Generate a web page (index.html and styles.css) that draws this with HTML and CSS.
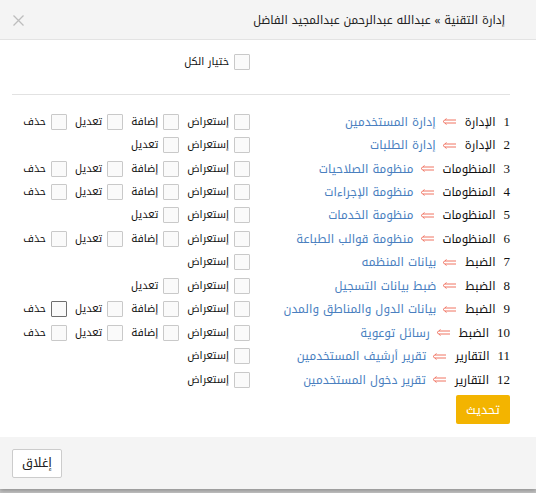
FILE: index.html
```html
<!DOCTYPE html>
<html lang="ar" dir="rtl">
<head>
<meta charset="utf-8">
<title>الصلاحيات</title>
<link rel="stylesheet" href="styles.css">
</head>
<body>
<div class="modal">
  <div class="modal-header">
    <h4 class="title">إدارة التقنية » عبدالله عبدالرحمن عبدالمجيد الفاضل</h4>
    <span class="close"><svg width="11" height="11" viewBox="0 0 11 11"><path d="M0.5 0.5 L10.5 10.5 M10.5 0.5 L0.5 10.5" stroke="#bdbdbd" stroke-width="1.3" fill="none"/></svg></span>
  </div>
  <div class="modal-body">
    <div class="grid select-all">
      <div></div>
      <div class="perms"><label class="chk"><span class="box"></span><span class="lbl">ختيار الكل</span></label></div>
    </div>
    <hr class="sep">
    <div class="rows">
      <div class="grid row">
        <div class="name"><span class="num">1</span><span class="cat">الإدارة</span><svg class="arr" width="14" height="7" viewBox="0 0 14 7"><path d="M4.5 0.5 L1 3.5 L4.5 6.5 M3 2 H14 M3 5 H14" stroke="#f07463" stroke-width="1" fill="none"/></svg><a class="link">إدارة المستخدمين</a></div>
        <div class="perms"><label class="chk"><span class="box"></span><span class="lbl">إستعراض</span></label><label class="chk"><span class="box"></span><span class="lbl">إضافة</span></label><label class="chk"><span class="box"></span><span class="lbl">تعديل</span></label><label class="chk"><span class="box"></span><span class="lbl">حذف</span></label></div>
      </div>
      <div class="grid row">
        <div class="name"><span class="num">2</span><span class="cat">الإدارة</span><svg class="arr" width="14" height="7" viewBox="0 0 14 7"><path d="M4.5 0.5 L1 3.5 L4.5 6.5 M3 2 H14 M3 5 H14" stroke="#f07463" stroke-width="1" fill="none"/></svg><a class="link">إدارة الطلبات</a></div>
        <div class="perms"><label class="chk"><span class="box"></span><span class="lbl">إستعراض</span></label><label class="chk"><span class="box"></span><span class="lbl">تعديل</span></label></div>
      </div>
      <div class="grid row">
        <div class="name"><span class="num">3</span><span class="cat">المنظومات</span><svg class="arr" width="14" height="7" viewBox="0 0 14 7"><path d="M4.5 0.5 L1 3.5 L4.5 6.5 M3 2 H14 M3 5 H14" stroke="#f07463" stroke-width="1" fill="none"/></svg><a class="link">منظومة الصلاحيات</a></div>
        <div class="perms"><label class="chk"><span class="box"></span><span class="lbl">إستعراض</span></label><label class="chk"><span class="box"></span><span class="lbl">إضافة</span></label><label class="chk"><span class="box"></span><span class="lbl">تعديل</span></label><label class="chk"><span class="box"></span><span class="lbl">حذف</span></label></div>
      </div>
      <div class="grid row">
        <div class="name"><span class="num">4</span><span class="cat">المنظومات</span><svg class="arr" width="14" height="7" viewBox="0 0 14 7"><path d="M4.5 0.5 L1 3.5 L4.5 6.5 M3 2 H14 M3 5 H14" stroke="#f07463" stroke-width="1" fill="none"/></svg><a class="link">منظومة الإجراءات</a></div>
        <div class="perms"><label class="chk"><span class="box"></span><span class="lbl">إستعراض</span></label><label class="chk"><span class="box"></span><span class="lbl">إضافة</span></label><label class="chk"><span class="box"></span><span class="lbl">تعديل</span></label><label class="chk"><span class="box"></span><span class="lbl">حذف</span></label></div>
      </div>
      <div class="grid row">
        <div class="name"><span class="num">5</span><span class="cat">المنظومات</span><svg class="arr" width="14" height="7" viewBox="0 0 14 7"><path d="M4.5 0.5 L1 3.5 L4.5 6.5 M3 2 H14 M3 5 H14" stroke="#f07463" stroke-width="1" fill="none"/></svg><a class="link">منظومة الخدمات</a></div>
        <div class="perms"><label class="chk"><span class="box"></span><span class="lbl">إستعراض</span></label><label class="chk"><span class="box"></span><span class="lbl">تعديل</span></label></div>
      </div>
      <div class="grid row">
        <div class="name"><span class="num">6</span><span class="cat">المنظومات</span><svg class="arr" width="14" height="7" viewBox="0 0 14 7"><path d="M4.5 0.5 L1 3.5 L4.5 6.5 M3 2 H14 M3 5 H14" stroke="#f07463" stroke-width="1" fill="none"/></svg><a class="link">منظومة قوالب الطباعة</a></div>
        <div class="perms"><label class="chk"><span class="box"></span><span class="lbl">إستعراض</span></label><label class="chk"><span class="box"></span><span class="lbl">إضافة</span></label><label class="chk"><span class="box"></span><span class="lbl">تعديل</span></label><label class="chk"><span class="box"></span><span class="lbl">حذف</span></label></div>
      </div>
      <div class="grid row">
        <div class="name"><span class="num">7</span><span class="cat">الضبط</span><svg class="arr" width="14" height="7" viewBox="0 0 14 7"><path d="M4.5 0.5 L1 3.5 L4.5 6.5 M3 2 H14 M3 5 H14" stroke="#f07463" stroke-width="1" fill="none"/></svg><a class="link">بيانات المنظمه</a></div>
        <div class="perms"><label class="chk"><span class="box"></span><span class="lbl">إستعراض</span></label></div>
      </div>
      <div class="grid row">
        <div class="name"><span class="num">8</span><span class="cat">الضبط</span><svg class="arr" width="14" height="7" viewBox="0 0 14 7"><path d="M4.5 0.5 L1 3.5 L4.5 6.5 M3 2 H14 M3 5 H14" stroke="#f07463" stroke-width="1" fill="none"/></svg><a class="link">ضبط بيانات التسجيل</a></div>
        <div class="perms"><label class="chk"><span class="box"></span><span class="lbl">إستعراض</span></label><label class="chk"><span class="box"></span><span class="lbl">تعديل</span></label></div>
      </div>
      <div class="grid row">
        <div class="name"><span class="num">9</span><span class="cat">الضبط</span><svg class="arr" width="14" height="7" viewBox="0 0 14 7"><path d="M4.5 0.5 L1 3.5 L4.5 6.5 M3 2 H14 M3 5 H14" stroke="#f07463" stroke-width="1" fill="none"/></svg><a class="link">بيانات الدول والمناطق والمدن</a></div>
        <div class="perms"><label class="chk"><span class="box"></span><span class="lbl">إستعراض</span></label><label class="chk"><span class="box"></span><span class="lbl">إضافة</span></label><label class="chk"><span class="box"></span><span class="lbl">تعديل</span></label><label class="chk"><span class="box hover"></span><span class="lbl">حذف</span></label></div>
      </div>
      <div class="grid row">
        <div class="name"><span class="num">10</span><span class="cat">الضبط</span><svg class="arr" width="14" height="7" viewBox="0 0 14 7"><path d="M4.5 0.5 L1 3.5 L4.5 6.5 M3 2 H14 M3 5 H14" stroke="#f07463" stroke-width="1" fill="none"/></svg><a class="link">رسائل توعوية</a></div>
        <div class="perms"><label class="chk"><span class="box"></span><span class="lbl">إستعراض</span></label><label class="chk"><span class="box"></span><span class="lbl">إضافة</span></label><label class="chk"><span class="box"></span><span class="lbl">تعديل</span></label><label class="chk"><span class="box"></span><span class="lbl">حذف</span></label></div>
      </div>
      <div class="grid row">
        <div class="name"><span class="num">11</span><span class="cat">التقارير</span><svg class="arr" width="14" height="7" viewBox="0 0 14 7"><path d="M4.5 0.5 L1 3.5 L4.5 6.5 M3 2 H14 M3 5 H14" stroke="#f07463" stroke-width="1" fill="none"/></svg><a class="link">تقرير أرشيف المستخدمين</a></div>
        <div class="perms"><label class="chk"><span class="box"></span><span class="lbl">إستعراض</span></label></div>
      </div>
      <div class="grid row">
        <div class="name"><span class="num">12</span><span class="cat">التقارير</span><svg class="arr" width="14" height="7" viewBox="0 0 14 7"><path d="M4.5 0.5 L1 3.5 L4.5 6.5 M3 2 H14 M3 5 H14" stroke="#f07463" stroke-width="1" fill="none"/></svg><a class="link">تقرير دخول المستخدمين</a></div>
        <div class="perms"><label class="chk"><span class="box"></span><span class="lbl">إستعراض</span></label></div>
      </div>
    </div>
    <div class="actions"><button class="btn-update">تحديث</button></div>
  </div>
  <div class="modal-footer">
    <button class="btn-close">إغلاق</button>
  </div>
</div>
</body>
</html>
```

FILE: styles.css
```css
html, body {
  margin: 0;
  padding: 0;
  background: #c4c4c4;
}
body {
  font-family: "Noto Kufi Arabic", "Noto Sans Arabic", "DejaVu Sans", sans-serif;
  color: #222;
  height: 493px;
  overflow: hidden;
}
.modal {
  width: 536px;
  background: #fff;
  box-shadow: 0 2px 4px rgba(0,0,0,0.25);
}
.modal-header {
  height: 39px;
  background: #f4f4f4;
  border-bottom: 1px solid #e3e3e3;
  display: flex;
  align-items: center;
  justify-content: space-between;
  padding: 0 31px 0 13px;
}
.title {
  margin: 0;
  font-size: 11.5px;
  font-weight: normal;
  color: #222;
}
.close {
  display: flex;
  align-items: center;
  padding-top: 1px;
}
.modal-body {
  padding: 14px 26px 13px 12px;
}
.grid {
  display: grid;
  grid-template-columns: 260px 1fr;
}
.select-all {
  height: 16px;
  align-items: center;
}
.sep {
  border: 0;
  border-top: 1px solid #e2e2e2;
  margin: 24px 0 15px;
}
.row {
  height: 23.45px;
  align-items: center;
}
.name {
  display: flex;
  align-items: center;
  font-size: 11.8px;
  line-height: 16px;
  white-space: nowrap;
}
.num {
  font-family: "Liberation Serif", serif;
  font-size: 13px;
  color: #111;
  margin-left: 8px;
}
.cat {
  color: #111;
  font-size: 11.5px;
  margin-left: 9px;
}
.arr {
  margin-left: 6px;
  flex: none;
}
.link {
  color: #4a7fbf;
}
.perms {
  display: flex;
  align-items: center;
  gap: 8px;
}
.chk {
  display: inline-flex;
  align-items: center;
  gap: 5px;
}
.box {
  width: 14px;
  height: 14px;
  border: 1px solid #c9c9c9;
  background: #fafafa;
  border-radius: 1px;
  flex: none;
}
.box.hover {
  border-color: #6e6e6e;
}
.lbl {
  font-size: 10.5px;
  line-height: 14px;
  color: #111;
}
.actions {
  display: flex;
  margin-top: 4px;
}
.btn-update {
  width: 54px;
  height: 29px;
  border: 0;
  border-radius: 2px;
  background: #f3b400;
  color: #fff;
  font-family: inherit;
  font-size: 12.5px;
  padding: 0;
}
.modal-footer {
  height: 52px;
  background: #f4f4f4;
  display: flex;
  align-items: center;
  justify-content: flex-end;
  padding: 0 12px;
}
.btn-close {
  width: 50px;
  height: 29px;
  background: #fff;
  border: 1px solid #cccccc;
  border-radius: 2px;
  color: #222;
  font-family: inherit;
  font-size: 12.5px;
  padding: 0;
}
```
